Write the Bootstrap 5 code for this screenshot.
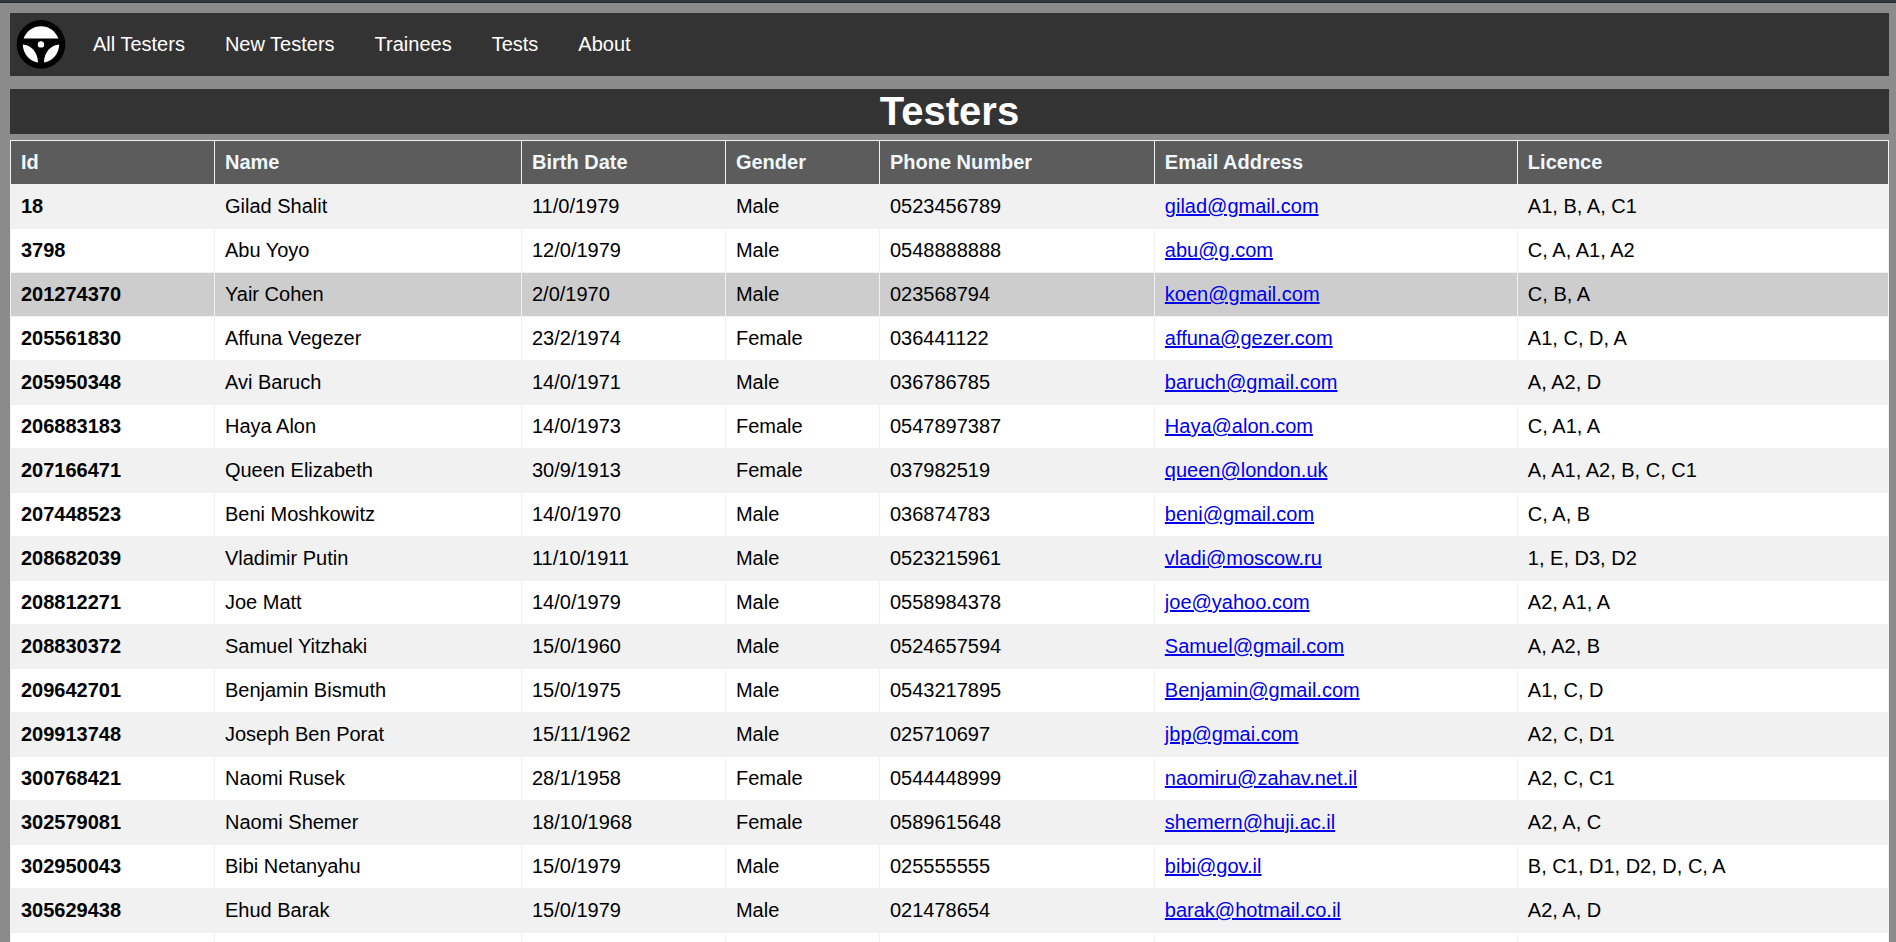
<!DOCTYPE html>
<html lang="en">
<head>
<meta charset="utf-8">
<meta name="viewport" content="width=device-width, initial-scale=1">
<title>Testers</title>
<link href="https://cdn.jsdelivr.net/npm/bootstrap@5.3.0/dist/css/bootstrap.min.css" rel="stylesheet">
<style>
  body { font-family: "Liberation Sans", Arial, sans-serif; font-size: 20px; line-height: 23px; color: #000; background: #8b8b8b; border-top: 2px solid #33393c; }
  .top-line { height: 1px; background: #24282a; }
  .page { padding: 10px 7px 0 10px; }
  .bar { background: #333; color: #fff; }
  .main-nav { height: 63px; padding-left: 6px; margin-bottom: 13px; }
  .main-nav .nav-link { color: #fff; padding: 20px; }
  .main-nav .nav-link:hover { background: #111; }
  .logo { width: 50px; height: 50px; margin-right: 7px; }
  .page-title { font-size: 40px; font-weight: 700; line-height: 45px; margin-bottom: 6px; }
  .testers { table-layout: fixed; background: #fff; border-collapse: collapse; }
  .testers th, .testers td { border: 1px solid #f1f1f1; padding: 10px; text-align: left; white-space: nowrap; height: 44px; }
  .testers thead th { background: #5c5c5c; color: aliceblue; }
  .testers tbody tr:nth-child(odd) { background: #f1f1f1; }
  .testers tbody tr.current { background: #cdcdcd; }
  .testers a { color: #00e; text-decoration: underline; }
  .c-id, .c-date { width: 10.86%; }
  .c-name { width: 16.35%; }
  .c-gender { width: 8.2%; }
  .c-phone { width: 14.64%; }
  .c-email { width: 19.33%; }
</style>
</head>
<body class="vh-100 overflow-hidden">
<div class="top-line"></div>
<div class="page">
  <nav class="main-nav bar d-flex align-items-center" aria-label="Main">
    <a href="#" class="logo d-block" aria-label="Home">
      <svg class="d-block" width="50" height="50" viewBox="0 0 50 50" aria-hidden="true">
        <circle cx="25" cy="24.400" r="24.300" fill="#000"/>
        <path fill="#fff" d="M7.600 18.400C10.500 11 17 6.200 25 6.200S39.500 11 42.400 18.400ZM6.800 24.500C15 24.800 22 32.500 22 42.500C13.500 41 7 34 6.800 24.500ZM43.200 24.500C35 24.800 28 32.500 28 42.500C36.500 41 43 34 43.200 24.500Z"/>
        <circle cx="25" cy="24.400" r="3.200" fill="#fff"/>
      </svg>
    </a>
    <ul class="nav flex-nowrap">
      <li class="nav-item"><a class="nav-link" href="#">All Testers</a></li>
      <li class="nav-item"><a class="nav-link" href="#">New Testers</a></li>
      <li class="nav-item"><a class="nav-link" href="#">Trainees</a></li>
      <li class="nav-item"><a class="nav-link" href="#">Tests</a></li>
      <li class="nav-item"><a class="nav-link" href="#">About</a></li>
    </ul>
  </nav>
  <h1 class="page-title bar text-center">Testers</h1>
  <table class="testers w-100">
    <colgroup><col class="c-id"><col class="c-name"><col class="c-date"><col class="c-gender"><col class="c-phone"><col class="c-email"><col></colgroup>
    <thead>
      <tr><th scope="col">Id</th><th scope="col">Name</th><th scope="col">Birth Date</th><th scope="col">Gender</th><th scope="col">Phone Number</th><th scope="col">Email Address</th><th scope="col">Licence</th></tr>
    </thead>
    <tbody>
      <tr><th scope="row">18</th><td>Gilad Shalit</td><td>11/0/1979</td><td>Male</td><td>0523456789</td><td><a href="mailto:gilad@gmail.com">gilad@gmail.com</a></td><td>A1, B, A, C1</td></tr>
      <tr><th scope="row">3798</th><td>Abu Yoyo</td><td>12/0/1979</td><td>Male</td><td>0548888888</td><td><a href="mailto:abu@g.com">abu@g.com</a></td><td>C, A, A1, A2</td></tr>
      <tr class="current"><th scope="row">201274370</th><td>Yair Cohen</td><td>2/0/1970</td><td>Male</td><td>023568794</td><td><a href="mailto:koen@gmail.com">koen@gmail.com</a></td><td>C, B, A</td></tr>
      <tr><th scope="row">205561830</th><td>Affuna Vegezer</td><td>23/2/1974</td><td>Female</td><td>036441122</td><td><a href="mailto:affuna@gezer.com">affuna@gezer.com</a></td><td>A1, C, D, A</td></tr>
      <tr><th scope="row">205950348</th><td>Avi Baruch</td><td>14/0/1971</td><td>Male</td><td>036786785</td><td><a href="mailto:baruch@gmail.com">baruch@gmail.com</a></td><td>A, A2, D</td></tr>
      <tr><th scope="row">206883183</th><td>Haya Alon</td><td>14/0/1973</td><td>Female</td><td>0547897387</td><td><a href="mailto:Haya@alon.com">Haya@alon.com</a></td><td>C, A1, A</td></tr>
      <tr><th scope="row">207166471</th><td>Queen Elizabeth</td><td>30/9/1913</td><td>Female</td><td>037982519</td><td><a href="mailto:queen@london.uk">queen@london.uk</a></td><td>A, A1, A2, B, C, C1</td></tr>
      <tr><th scope="row">207448523</th><td>Beni Moshkowitz</td><td>14/0/1970</td><td>Male</td><td>036874783</td><td><a href="mailto:beni@gmail.com">beni@gmail.com</a></td><td>C, A, B</td></tr>
      <tr><th scope="row">208682039</th><td>Vladimir Putin</td><td>11/10/1911</td><td>Male</td><td>0523215961</td><td><a href="mailto:vladi@moscow.ru">vladi@moscow.ru</a></td><td>1, E, D3, D2</td></tr>
      <tr><th scope="row">208812271</th><td>Joe Matt</td><td>14/0/1979</td><td>Male</td><td>0558984378</td><td><a href="mailto:joe@yahoo.com">joe@yahoo.com</a></td><td>A2, A1, A</td></tr>
      <tr><th scope="row">208830372</th><td>Samuel Yitzhaki</td><td>15/0/1960</td><td>Male</td><td>0524657594</td><td><a href="mailto:Samuel@gmail.com">Samuel@gmail.com</a></td><td>A, A2, B</td></tr>
      <tr><th scope="row">209642701</th><td>Benjamin Bismuth</td><td>15/0/1975</td><td>Male</td><td>0543217895</td><td><a href="mailto:Benjamin@gmail.com">Benjamin@gmail.com</a></td><td>A1, C, D</td></tr>
      <tr><th scope="row">209913748</th><td>Joseph Ben Porat</td><td>15/11/1962</td><td>Male</td><td>025710697</td><td><a href="mailto:jbp@gmai.com">jbp@gmai.com</a></td><td>A2, C, D1</td></tr>
      <tr><th scope="row">300768421</th><td>Naomi Rusek</td><td>28/1/1958</td><td>Female</td><td>0544448999</td><td><a href="mailto:naomiru@zahav.net.il">naomiru@zahav.net.il</a></td><td>A2, C, C1</td></tr>
      <tr><th scope="row">302579081</th><td>Naomi Shemer</td><td>18/10/1968</td><td>Female</td><td>0589615648</td><td><a href="mailto:shemern@huji.ac.il">shemern@huji.ac.il</a></td><td>A2, A, C</td></tr>
      <tr><th scope="row">302950043</th><td>Bibi Netanyahu</td><td>15/0/1979</td><td>Male</td><td>025555555</td><td><a href="mailto:bibi@gov.il">bibi@gov.il</a></td><td>B, C1, D1, D2, D, C, A</td></tr>
      <tr><th scope="row">305629438</th><td>Ehud Barak</td><td>15/0/1979</td><td>Male</td><td>021478654</td><td><a href="mailto:barak@hotmail.co.il">barak@hotmail.co.il</a></td><td>A2, A, D</td></tr>
      <tr><td></td><td></td><td></td><td></td><td></td><td></td><td></td></tr>
    </tbody>
  </table>
</div>
<script src="https://cdn.jsdelivr.net/npm/bootstrap@5.3.0/dist/js/bootstrap.bundle.min.js"></script>
</body>
</html>
